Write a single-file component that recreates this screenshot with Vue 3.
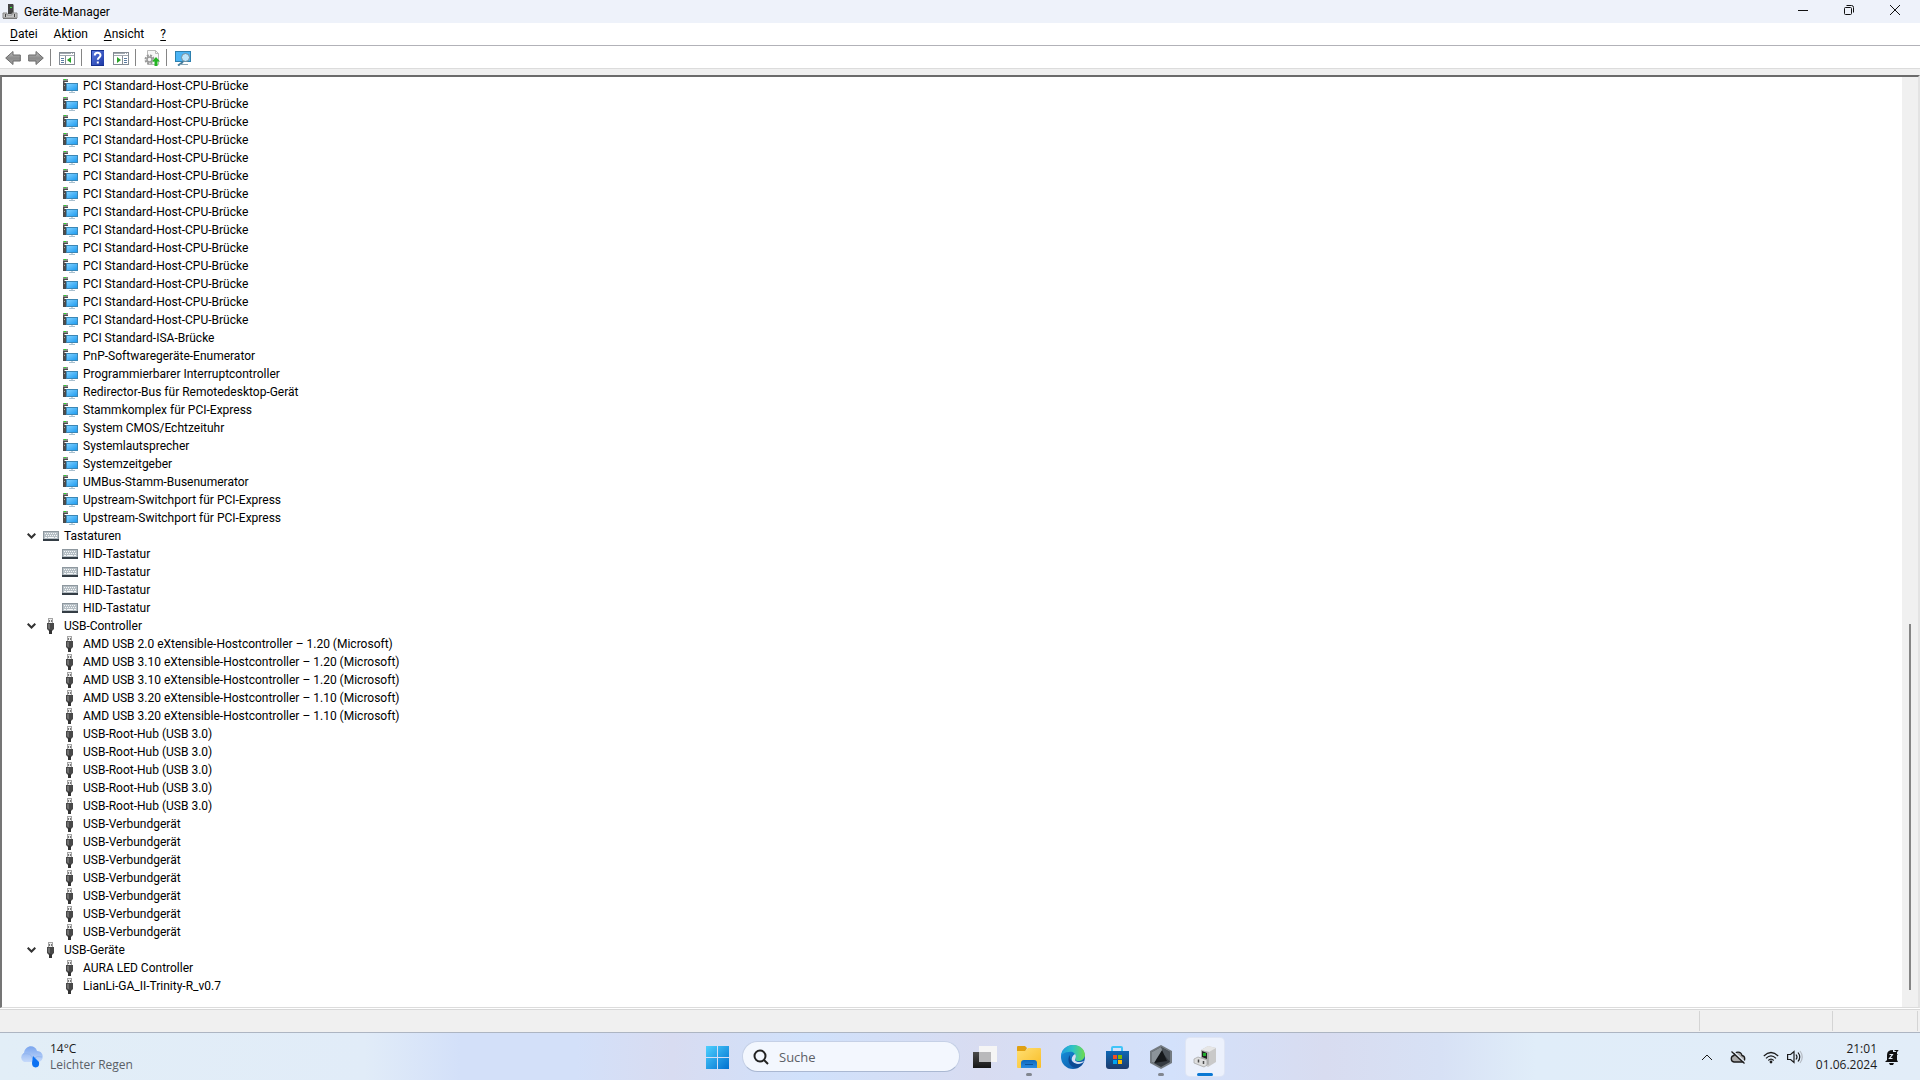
<script setup>
const repeat = (name, count) => Array(count).fill(name)

const groups = [
  {
    name: '',
    icon: 'system',
    devices: [
      ...repeat('PCI Standard-Host-CPU-Brücke', 14),
      'PCI Standard-ISA-Brücke',
      'PnP-Softwaregeräte-Enumerator',
      'Programmierbarer Interruptcontroller',
      'Redirector-Bus für Remotedesktop-Gerät',
      'Stammkomplex für PCI-Express',
      'System CMOS/Echtzeituhr',
      'Systemlautsprecher',
      'Systemzeitgeber',
      'UMBus-Stamm-Busenumerator',
      ...repeat('Upstream-Switchport für PCI-Express', 2),
    ],
  },
  { name: 'Tastaturen', icon: 'keyboard', devices: repeat('HID-Tastatur', 4) },
  {
    name: 'USB-Controller',
    icon: 'usb',
    devices: [
      'AMD USB 2.0 eXtensible-Hostcontroller – 1.20 (Microsoft)',
      ...repeat('AMD USB 3.10 eXtensible-Hostcontroller – 1.20 (Microsoft)', 2),
      ...repeat('AMD USB 3.20 eXtensible-Hostcontroller – 1.10 (Microsoft)', 2),
      ...repeat('USB-Root-Hub (USB 3.0)', 5),
      ...repeat('USB-Verbundgerät', 7),
    ],
  },
  { name: 'USB-Geräte', icon: 'usb', devices: ['AURA LED Controller', 'LianLi-GA_II-Trinity-R_v0.7'] },
]

const menus = [
  ['', 'D', 'atei'],
  ['Ak', 't', 'ion'],
  ['', 'A', 'nsicht'],
  ['', '?', ''],
]

const tools = [
  [{ icon: 'back', label: 'Zurück' }, { icon: 'forward', label: 'Vorwärts' }],
  [{ icon: 'tree-pane', label: 'Konsolenstruktur' }],
  [{ icon: 'help', label: 'Hilfe' }, { icon: 'action-pane', label: 'Aktionsbereich' }],
  [{ icon: 'update', label: 'Treiber aktualisieren' }],
  [{ icon: 'scan', label: 'Nach geänderter Hardware suchen' }],
]

const apps = [
  { icon: 'taskview', label: 'Taskansicht', state: '' },
  { icon: 'explorer', label: 'Explorer', state: 'running' },
  { icon: 'edge', label: 'Edge', state: '' },
  { icon: 'store', label: 'Store', state: '' },
  { icon: 'crate', label: 'Armoury Crate', state: 'running' },
  { icon: 'devices', label: 'Geräte-Manager', state: 'active' },
]
</script>

<template>
  <svg class="sprite" aria-hidden="true">
    <defs>
      <linearGradient id="g-screen" x1="0" y1="0" x2="1" y2="1"><stop offset="0" stop-color="#7fd0ff" /><stop offset="1" stop-color="#1f9cf0" /></linearGradient>
      <linearGradient id="g-arrow" x1="0" y1="0" x2="0" y2="1"><stop offset="0" stop-color="#c4c4c4" /><stop offset=".5" stop-color="#8c8c8c" /><stop offset="1" stop-color="#a4a4a4" /></linearGradient>
      <linearGradient id="g-help" x1="0" y1="0" x2="1" y2="1"><stop offset="0" stop-color="#5a7be0" /><stop offset="1" stop-color="#1c37a5" /></linearGradient>
      <linearGradient id="g-win" x1="0" y1="0" x2="1" y2="1"><stop offset="0" stop-color="#4dd0ff" /><stop offset="1" stop-color="#0070cf" /></linearGradient>
      <linearGradient id="g-cloud" x1="0" y1="0" x2="0" y2="1"><stop offset="0" stop-color="#7aa5ee" /><stop offset="1" stop-color="#c6dafa" /></linearGradient>
      <linearGradient id="g-folder" x1="0" y1="0" x2="1" y2="1"><stop offset="0" stop-color="#ffdf73" /><stop offset="1" stop-color="#f9bd26" /></linearGradient>
      <linearGradient id="g-tray" x1="0" y1="0" x2="0" y2="1"><stop offset="0" stop-color="#0d67bd" /><stop offset="1" stop-color="#2b8be0" /></linearGradient>
      <linearGradient id="g-edge" x1="0" y1="0" x2="1" y2="0"><stop offset="0" stop-color="#1f9be0" /><stop offset=".5" stop-color="#2fc4c4" /><stop offset="1" stop-color="#6fdc4b" /></linearGradient>
      <linearGradient id="g-edge2" x1="0" y1="0" x2="1" y2="1"><stop offset="0" stop-color="#1796e0" /><stop offset="1" stop-color="#0d4fa0" /></linearGradient>
      <linearGradient id="g-store" x1="0" y1="0" x2="0" y2="1"><stop offset="0" stop-color="#0d67b5" /><stop offset="1" stop-color="#1d3a6b" /></linearGradient>
      <linearGradient id="g-dark" x1="0" y1="0" x2="0" y2="1"><stop offset="0" stop-color="#4a4a4a" /><stop offset="1" stop-color="#161616" /></linearGradient>
    </defs>
    <symbol id="i-system" viewBox="0 0 16 16">
      <rect x="1" y="1" width="5" height="12" fill="#4b4b4b" /><rect x="1" y="1" width="5" height="2" fill="#8a8a8a" /><rect x="2" y="1" width="2" height="1" fill="#2bdc2b" />
      <path d="M2 4.500h3M2 7.500h1" stroke="#a8a8a8" /><rect x="3" y="4" width="13" height="1" fill="#fff" /><rect x="4" y="5" width="12" height="8" fill="#3c87b5" /><rect x="5" y="6" width="10" height="6" fill="url(#g-screen)" />
      <path d="M7 14.500h6" stroke="#a9c0cf" /><rect x="9" y="13" width="2" height="1" fill="#c5d6e0" />
    </symbol>
    <symbol id="i-keyboard" viewBox="0 0 16 16">
      <rect y="3" width="16" height="9" fill="#8e989f" /><rect x="1" y="4" width="14" height="7" fill="#b5bec4" /><rect y="11" width="16" height="2" fill="#343d45" />
      <path d="M2 5.500h12M3 7.500h11" stroke="#f5f7f8" stroke-dasharray="1 1" /><path d="M2 9.500h2M5 9.500h6M12 9.500h2" stroke="#f5f7f8" />
    </symbol>
    <symbol id="i-usb" viewBox="0 0 16 16">
      <rect x="5.500" y=".5" width="4" height="5" fill="#eee" stroke="#a5a5a5" /><path d="M6.500 2v2M8.500 2v2" stroke="#777" />
      <path d="M4 5h7v6l-2 2H6l-2-2z" fill="#484848" /><path d="M5 6h2v5H6l-1-1z" fill="#707070" /><rect x="6" y="12" width="3" height="4" fill="#333" />
    </symbol>
    <symbol id="i-manager" viewBox="0 0 16 16">
      <path d="M6 0h5v10H6z" fill="#444" /><path d="M11 0l1 1v9h-1z" fill="#888" /><rect x="8" y="3" width="2" height="1" fill="#35e335" />
      <path d="M1 9h4v2h5V9h5v5H1z" fill="#c4c4c4" stroke="#8a8a8a" /><path d="M3.500 10v3M12.500 10v3" stroke="#444" /><rect x="1" y="14" width="14" height="1" fill="#777" />
    </symbol>
    <symbol id="i-back" viewBox="0 0 16 16"><path d="M.7 8L8 1.500v3.500h7.300v6H8v3.500z" fill="url(#g-arrow)" stroke="#6b6b6b" /></symbol>
    <symbol id="i-forward" viewBox="0 0 16 16"><path d="M15.300 8L8 1.500v3.500H.7v6H8v3.500z" fill="url(#g-arrow)" stroke="#6b6b6b" /></symbol>
    <symbol id="i-tree-pane" viewBox="0 0 16 16">
      <rect x=".5" y="2.500" width="15" height="12" fill="#fff" stroke="#858c94" /><path d="M1 3.500h14M1 5.500h14" stroke="#a2a9b1" stroke-width="1" /><path d="M12 3.500h1M14 3.500h1" stroke="#fff" /><path d="M6.500 6v8" stroke="#858c94" />
      <path d="M2 8.500h3M2 10.500h3M2 12.500h3" stroke="#5a7ba0" /><path d="M12 7v6L8 10z" fill="#28a428" />
    </symbol>
    <symbol id="i-action-pane" viewBox="0 0 16 16">
      <rect x=".5" y="2.500" width="15" height="12" fill="#fff" stroke="#858c94" /><path d="M1 3.500h14M1 5.500h14" stroke="#a2a9b1" /><path d="M12 3.500h1M14 3.500h1" stroke="#fff" /><path d="M9.500 6v8" stroke="#858c94" />
      <path d="M11 8.500h3M11 10.500h3M11 12.500h3" stroke="#5a7ba0" /><path d="M4 7v6l4-3z" fill="#28a428" />
    </symbol>
    <symbol id="i-help" viewBox="0 0 16 16">
      <rect x="1" width="13" height="16" fill="#16308f" /><rect x="2" y="1" width="12" height="14" fill="url(#g-help)" />
      <path d="M4.800 5.500C4.800 2 10.500 2 10.500 5.200c0 2.200-2.700 2.300-2.700 4.600" fill="none" stroke="#fff" stroke-width="2" /><rect x="6.800" y="11.500" width="2" height="2" fill="#fff" />
    </symbol>
    <symbol id="i-update" viewBox="0 0 16 16">
      <path d="M3.500.5h8l3 3v11h-11z" fill="#f8f8f8" stroke="#bababa" /><path d="M11.500.5v3h3" fill="none" stroke="#bababa" />
      <circle cx="5.500" cy="9.500" r="4" fill="none" stroke="#9a9a9a" stroke-width="2" stroke-dasharray="2 1.140" /><circle cx="5.500" cy="9.500" r="2.500" fill="#f4f4f4" stroke="#9a9a9a" stroke-width="1.500" />
      <path d="M12 7l4 4.500h-2.500V16h-3v-4.500H8z" fill="#23b523" />
    </symbol>
    <symbol id="i-scan" viewBox="0 0 16 16">
      <rect y="1" width="16" height="11" fill="#2d7fae" /><rect x="1" y="2" width="14" height="9" fill="#4bb4f5" />
      <path d="M8 12L3 15.500" stroke="#477d9c" stroke-width="2" /><circle cx="10.500" cy="7.500" r="4" fill="#bde5fb" stroke="#738c9a" /><path d="M5 14.500h8" stroke="#8ba7b7" />
    </symbol>
    <symbol id="i-windows" viewBox="0 0 24 24"><path d="M1 1h11v11H1zM13 1h11v11H13zM1 13h11v11H1zM13 13h11v11H13z" fill="url(#g-win)" /></symbol>
    <symbol id="i-taskview" viewBox="0 0 24 24"><path d="M6 1h18v16H6z" fill="#f5f5f5" /><path d="M0 7h18v16H0z" fill="url(#g-dark)" /><path d="M6 7h12v10H6z" fill="#b9b9bb" /></symbol>
    <symbol id="i-explorer" viewBox="0 0 24 24">
      <path d="M0 2q0-1 1-1h7l2 2-2 4H0z" fill="#e0a012" /><path d="M0 6h8l3-3h12q1 0 1 1v18q0 1-1 1H1q-1 0-1-1z" fill="url(#g-folder)" />
      <path d="M4 23v-5q0-3 3-3h10q3 0 3 3v5z" fill="url(#g-tray)" /><path d="M8 19.500h8" stroke="#0c539c" />
    </symbol>
    <symbol id="i-edge" viewBox="0 0 24 24">
      <circle cx="12" cy="12" r="12" fill="url(#g-edge2)" />
      <path d="M0 11C1-3 23-4 24 10c0 6-9 8-10 4 2-5-2-8-6-7-4 0-7 2-8 4z" fill="url(#g-edge)" />
      <path d="M14 9c2 3 0 4 0 6 1 3 7 2 9 1-1 2-3 3-6 3-6 0-9-6-3-10z" fill="#d5def2" /><path d="M9 10c-4 5 0 13 7 13 3-1 5-3 6-5-5 3-14 0-13-8z" fill="#0d4a94" />
    </symbol>
    <symbol id="i-store" viewBox="0 0 24 24">
      <path d="M7 7V3q0-1 1-1h8q1 0 1 1v4" fill="none" stroke="#3fc4f8" stroke-width="2" /><path d="M1 6h23v15q0 3-3 3H4q-3 0-3-3z" fill="url(#g-store)" />
      <path d="M8 10h4v4H8z" fill="#f25022" /><path d="M13 10h4v4h-4z" fill="#7fba00" /><path d="M8 15h4v4H8z" fill="#00a4ef" /><path d="M13 15h4v4h-4z" fill="#ffb900" />
    </symbol>
    <symbol id="i-crate" viewBox="0 0 24 24">
      <path d="M12 0l11 6v12l-11 6L1 18V6z" fill="#737a80" /><path d="M12 2l9 5v10l-9 5-9-5V7z" fill="#343a40" /><path d="M12 2l9 5v10l-9-11z" fill="#4d545b" />
      <path d="M13 5l5 11-13 2z" fill="#15181b" /><path d="M3 7l9-5 1 3-8 13-2-1z" fill="#8b9399" />
    </symbol>
    <symbol id="i-devices" viewBox="0 0 24 24">
      <path d="M8 5l7-4 8 2v14l-8 5-7-4z" fill="#c9c9c9" /><path d="M8 5l7-4 8 2-7 4z" fill="#e6e6e6" /><path d="M8 5l8 2v13l-8-3z" fill="#b0b0b0" /><path d="M9 6l5 2v6l-5-2z" fill="#222" /><rect x="10" y="8" width="3" height="3" fill="#1fae2b" />
      <path d="M1 14l4-2 9 3v5l-3 2-10-4z" fill="#dedede" stroke="#a0a0a0" stroke-width=".7" /><path d="M5.500 14.500v3M10.500 16v3" stroke="#4a4a4a" stroke-width="1.500" />
    </symbol>
    <symbol id="i-weather" viewBox="0 0 24 24">
      <path d="M5 17a5 5 0 0 1 0-9C6 0 16-1 18 6c7 0 8 10 1 11z" fill="url(#g-cloud)" /><path d="M4 9q8-2 10 5 4-4 9-2" fill="none" stroke="#94b7f0" />
      <path d="M14 11l6 6q1 5-3.500 5.500Q13 22 13 18z" fill="#0d72f2" />
    </symbol>
    <symbol id="i-cloud-off" viewBox="0 0 16 16">
      <path d="M4 13a3.300 3.300 0 0 1 0-6.500C5 2 11 2 12 6.500a3.300 3.300 0 0 1 0 6.500z" fill="#aaa" stroke="#1b1b1b" stroke-width="1.300" /><path d="M2.500 1.500l13 12" stroke="#e4edf7" stroke-width="1.500" /><path d="M1.500 2.500l13 12" stroke="#1b1b1b" stroke-width="1.300" />
    </symbol>
    <symbol id="i-wifi" viewBox="0 0 16 16">
      <path d="M.8 7q7.200-7 14.400 0M3 9.300q5-5 10 0M5.300 11.500q2.700-2.600 5.400 0" fill="none" stroke="#1b1b1b" stroke-width="1.200" /><circle cx="8" cy="13" r="1.400" fill="#1b1b1b" />
    </symbol>
    <symbol id="i-speaker" viewBox="0 0 16 16">
      <path d="M.6 5.500h3L7 2.500v11l-3.400-3h-3z" fill="none" stroke="#1b1b1b" stroke-width="1.200" /><path d="M9 5.500q2 2.500 0 5M11 3.500q3.500 4.500 0 9" fill="none" stroke="#1b1b1b" stroke-width="1.200" /><path d="M13 2q4.500 6 0 12" fill="none" stroke="#b5bbc3" stroke-width="1.200" />
    </symbol>
    <symbol id="i-bell" viewBox="0 0 16 16">
      <path d="M3 11V6q0-5 6-5v2h4v8l1 2H1zM5 14h5l-1 2H6z" fill="#111" /><path d="M5.500 5.500h3l-3 4h3" fill="none" stroke="#e4edf7" stroke-width="1.200" /><path d="M10.500 1.500h3l-3 4h3" fill="none" stroke="#111" stroke-width="1.200" />
    </symbol>
  </svg>

  <div class="desktop">
    <header class="titlebar">
      <svg class="icon"><use href="#i-manager" /></svg>
      <h1>Geräte-Manager</h1>
      <div class="caption">
        <button aria-label="Minimieren"><svg viewBox="0 0 10 10"><path d="M0 5.500h10" /></svg></button>
        <button aria-label="Wiederherstellen"><svg viewBox="0 0 10 10"><rect x=".5" y="2.500" width="7" height="7" rx="1" /><path d="M2.500.5h5q2 0 2 2v5" /></svg></button>
        <button aria-label="Schließen"><svg viewBox="0 0 10 10"><path d="M0 0l10 10M10 0L0 10" /></svg></button>
      </div>
    </header>

    <nav class="menubar">
      <button v-for="[before, key, after] in menus" :key="key">{{ before }}<u>{{ key }}</u>{{ after }}</button>
    </nav>

    <div class="toolbar">
      <div v-for="(group, g) in tools" :key="g" class="tool-group">
        <button v-for="tool in group" :key="tool.icon" :aria-label="tool.label">
          <svg class="icon"><use :href="'#i-' + tool.icon" /></svg>
        </button>
      </div>
    </div>

    <main class="pane">
      <ul class="tree">
        <li v-for="(group, g) in groups" :key="g">
          <div v-if="group.name" class="row">
            <button class="toggle" :aria-label="group.name"><svg viewBox="0 0 9 6"><path d="M.7 .7l3.800 3.800L8.300 .7" /></svg></button>
            <svg class="icon"><use :href="'#i-' + group.icon" /></svg>
            <span>{{ group.name }}</span>
          </div>
          <ul class="devices">
            <li v-for="(device, d) in group.devices" :key="d" class="row">
              <svg class="icon"><use :href="'#i-' + group.icon" /></svg>
              <span>{{ device }}</span>
            </li>
          </ul>
        </li>
      </ul>
      <div class="scrollbar"><div class="thumb"></div></div>
    </main>

    <footer class="status"><div></div><div></div><div></div></footer>

    <div class="taskbar">
      <button class="weather">
        <svg><use href="#i-weather" /></svg>
        <span>14°C<small>Leichter Regen</small></span>
      </button>
      <div class="apps">
        <button class="app" aria-label="Start"><svg><use href="#i-windows" /></svg></button>
        <label class="search">
          <svg viewBox="0 0 16 16"><circle cx="7" cy="7" r="5.500" /><path d="M11 11l4 4" /></svg>
          <input type="text" placeholder="Suche" aria-label="Suche" />
        </label>
        <button v-for="app in apps" :key="app.icon" class="app" :class="app.state" :aria-label="app.label">
          <svg><use :href="'#i-' + app.icon" /></svg>
        </button>
      </div>
      <div class="tray">
        <button class="more" aria-label="Ausgeblendete Symbole"><svg viewBox="0 0 12 12"><path d="M1 9l5-5 5 5" /></svg></button>
        <button aria-label="OneDrive"><svg class="icon"><use href="#i-cloud-off" /></svg></button>
        <button class="network" aria-label="Netzwerk und Lautstärke"><svg class="icon"><use href="#i-wifi" /></svg><svg class="icon"><use href="#i-speaker" /></svg></button>
        <button class="clock"><time>21:01<br />01.06.2024</time><svg class="icon"><use href="#i-bell" /></svg></button>
      </div>
    </div>
  </div>
</template>

<style>
body { margin: 0; }
</style>

<style scoped>
.sprite { position: absolute; width: 0; height: 0; }
.desktop { display: flex; flex-direction: column; min-height: 100vh; background: #fff; color: #000; font: 12px/18px Roboto, "Noto Sans", sans-serif; }
button { margin: 0; padding: 0; border: 0; background: none; color: inherit; font: inherit; }
ul { margin: 0; padding: 0; list-style: none; }
.icon { display: block; flex: none; width: 16px; height: 16px; }

.titlebar { display: flex; align-items: center; height: 23px; padding-left: 2px; background: #eef2fa; }
h1 { margin: 0 auto 0 6px; font: inherit; }
.caption { display: flex; height: 100%; padding-right: 2px; }
.caption button { display: flex; align-items: center; justify-content: center; width: 46px; padding-bottom: 3px; }
.caption svg { width: 10px; height: 10px; fill: none; stroke: #111; }

.menubar { display: flex; gap: 16px; height: 22px; padding-left: 10px; border-bottom: 1px solid #b2b2b8; }
.menubar u { text-underline-offset: 2px; }

.toolbar { display: flex; align-items: center; height: 22px; border-bottom: 1px solid #dcdcdc; }
.tool-group { display: flex; gap: 7px; padding: 1px 6px 0 8px; }
.tool-group:first-child { padding-left: 5px; }
.tool-group + .tool-group { border-left: 1px solid #858585; }

.pane { display: flex; flex: 1; border-top: 2px solid #6b6b6b; border-right: 2px solid #e3e3e3; border-bottom: 1px solid #dcdcdc; border-left: 2px solid #757575; outline: 6px solid #f0f0f0; outline-offset: 0; clip-path: inset(-6px 0 0 0); margin-top: 6px; }
.tree { flex: 1; padding-bottom: 12px; }
.row { display: flex; align-items: center; gap: 5px; height: 18px; white-space: nowrap; }
.tree > li > .row { padding-left: 25px; }
.toggle { display: flex; width: 11px; }
.toggle svg { width: 9px; height: 6px; fill: none; stroke: #333; stroke-width: 2px; }
.devices { padding-left: 60px; }
.scrollbar { display: flex; flex-direction: column; align-items: center; justify-content: flex-end; width: 16px; background: #f0f0f0; }
.thumb { width: 2px; height: 366px; margin-bottom: 17px; background: #858585; }

.status { display: flex; justify-content: flex-end; height: 22px; margin-top: 1px; border-top: 1px solid #d7d7d7; background: #f0f0f0; }
.status div { box-sizing: border-box; width: 133px; margin: 1px 0; border-left: 1px solid #d4d4d4; }
.status div:nth-child(2) { width: 85px; }
.status div:last-child { width: 3px; }

.taskbar { display: grid; grid-template-columns: 1fr auto 1fr; align-items: center; height: 47px; border-top: 1px solid #adb5c2; color: #1b1b1b; background: linear-gradient(90deg, #e2eef7 0%, #e1ecf8 19%, #d3e0f9 24%, #d3e0f9 30%, #d8dcf1 35%, #d0e1fb 42%, #d8dcf1 51%, #d3e1fb 61%, #d8dcf0 69%, #d7e1f5 75%, #e0edf9 80%, #e2edf8 100%); font-family: "Open Sans", "Noto Sans", sans-serif; line-height: 16px; }
.weather { display: flex; align-items: center; gap: 7px; padding-left: 19px; text-align: left; }
.weather svg { width: 24px; height: 24px; }
.weather span, .weather small { display: block; }
.weather small { color: #5a5f66; font-size: 12px; }
.apps { display: flex; align-items: center; padding-left: 2px; }
.app { position: relative; display: flex; align-items: center; justify-content: center; width: 38px; height: 38px; margin: 0 3px; border-radius: 4px; }
.app svg { width: 24px; height: 24px; }
.active { background: #ecf1fc; box-shadow: 0 0 0 1px #dfe5f4; }
.running::after, .active::after { content: ""; position: absolute; bottom: 0; width: 6px; height: 3px; border-radius: 2px; background: #81868f; }
.active::after { width: 16px; background: #0a78d4; }
.search { display: flex; align-items: center; gap: 10px; box-sizing: border-box; width: 218px; height: 31px; margin: 0 3px; padding-left: 10px; border: 1px solid #c5d0e6; border-bottom-color: #aab8d2; border-radius: 16px; background: #f3f7fe; }
.search svg { flex: none; width: 16px; height: 16px; fill: none; stroke: #222; stroke-width: 2px; }
.search input { min-width: 0; padding: 0; border: 0; outline: 0; background: none; font: 13px/20px "Open Sans", "Noto Sans", sans-serif; }
.search input::placeholder { color: #5c6066; opacity: 1; }
.tray { display: flex; align-items: center; justify-content: flex-end; padding-right: 20px; }
.tray > button { margin-right: 17px; }
.tray > .network { margin-right: 13px; }
.tray > button:last-child { margin-right: 0; }
.more svg { display: block; width: 12px; height: 12px; fill: none; stroke: #1b1b1b; stroke-width: 1px; }
.network { display: flex; gap: 8px; }
.clock { display: flex; align-items: center; gap: 7px; text-align: right; }
</style>
